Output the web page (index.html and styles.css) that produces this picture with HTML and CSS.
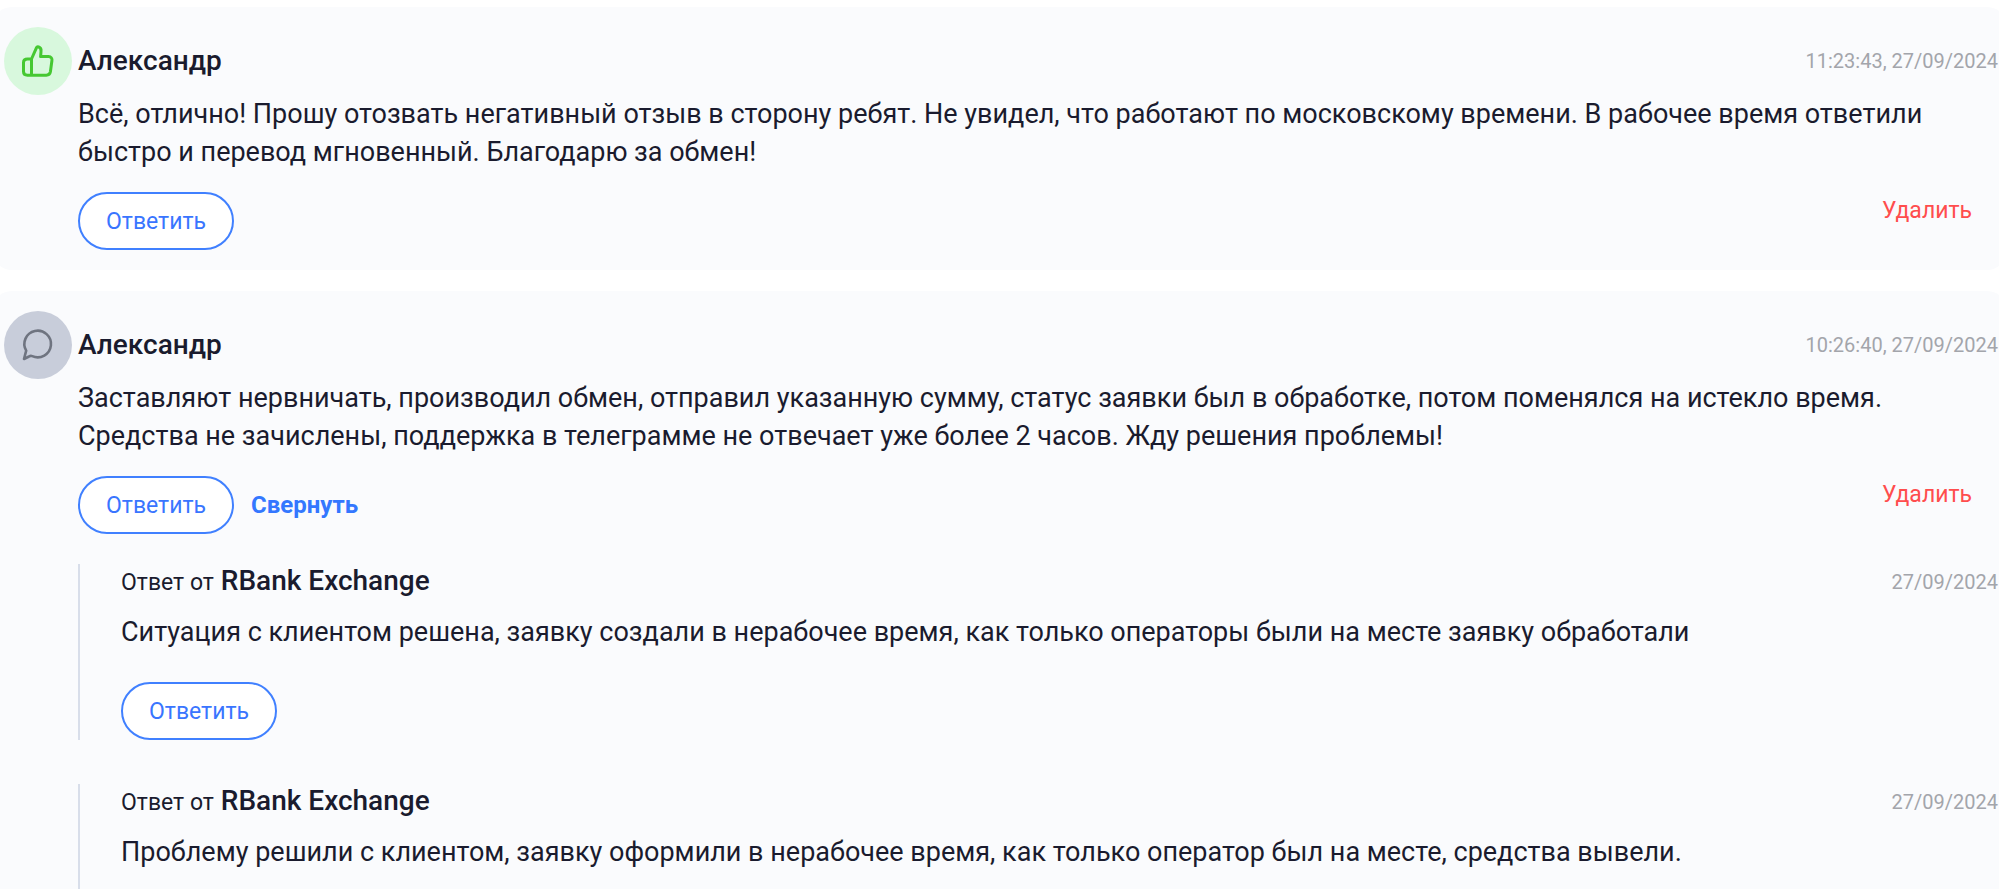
FILE: index.html
```html
<!DOCTYPE html>
<html lang="ru">
<head>
    <meta charset="UTF-8">
    <meta name="viewport" content="width=device-width, initial-scale=1.0">
    <title>Отзывы</title>
    <link rel="stylesheet" href="styles.css">
</head>
<body>
    <main class="reviews">
        <article class="review">
            <header class="review-head">
                <div class="avatar avatar-good">
                    <svg viewBox="0 0 34 34" fill="none" stroke="currentColor" stroke-width="3" stroke-linecap="round" stroke-linejoin="round">
                        <path d="M10.5 15 L15.4 3.8 Q16.2 2.3 17.6 2.9 C19.8 3.8 20.3 5.6 20 7.5 L19.6 12.6 H27.5 C30.1 12.6 31.4 14.4 30.9 16.8 L29.4 27.8 C29 30.3 27.7 31.2 25.3 31.2 H6.5 C4 31.2 2.5 30 2.5 27.5 V18.5 C2.5 16 4 15 6.5 15 H10.5 V31"/>
                    </svg>
                </div>
                <h2 class="author">Александр</h2>
                <time class="date">11:23:43, 27/09/2024</time>
            </header>
            <div class="review-body">
                <p class="text">Всё, отлично! Прошу отозвать негативный отзыв в сторону ребят. Не увидел, что работают по московскому времени. В рабочее время ответили быстро и перевод мгновенный. Благодарю за обмен!</p>
                <div class="actions">
                    <button class="btn" type="button">Ответить</button>
                    <button class="delete" type="button">Удалить</button>
                </div>
            </div>
        </article>

        <article class="review">
            <header class="review-head">
                <div class="avatar avatar-neutral">
                    <svg viewBox="0 0 34 34" fill="none" stroke="currentColor" stroke-width="2.6" stroke-linecap="round" stroke-linejoin="round">
                        <path d="M3 31 L5.2 22.7 A13.3 13.3 0 1 1 11.2 28.1 Q9.6 27.5 8 28.5 Z"/>
                    </svg>
                </div>
                <h2 class="author">Александр</h2>
                <time class="date">10:26:40, 27/09/2024</time>
            </header>
            <div class="review-body">
                <p class="text">Заставляют нервничать, производил обмен, отправил указанную сумму, статус заявки был в обработке, потом поменялся на истекло время. Средства не зачислены, поддержка в телеграмме не отвечает уже более 2 часов. Жду решения проблемы!</p>
                <div class="actions">
                    <button class="btn" type="button">Ответить</button>
                    <button class="toggle" type="button">Свернуть</button>
                    <button class="delete" type="button">Удалить</button>
                </div>

                <div class="replies">
                    <section class="reply">
                        <header class="reply-head">
                            <h3 class="reply-author"><span>Ответ от</span> RBank Exchange</h3>
                            <time class="date">27/09/2024</time>
                        </header>
                        <p class="text">Ситуация с клиентом решена, заявку создали в нерабочее время, как только операторы были на месте заявку обработали</p>
                        <button class="btn" type="button">Ответить</button>
                    </section>
                    <section class="reply">
                        <header class="reply-head">
                            <h3 class="reply-author"><span>Ответ от</span> RBank Exchange</h3>
                            <time class="date">27/09/2024</time>
                        </header>
                        <p class="text">Проблему решили с клиентом, заявку оформили в нерабочее время, как только оператор был на месте, средства вывели.</p>
                    </section>
                </div>
            </div>
        </article>
    </main>
</body>
</html>
```
FILE: styles.css
```css
body {
    margin: 0;
    font-family: Roboto, sans-serif;
    color: #1a1b2e;
    background-color: #fff;
    overflow-x: hidden;
}

h2, h3, p {
    margin: 0;
}

button {
    font-family: inherit;
    cursor: pointer;
}

.reviews {
    display: flex;
    flex-direction: column;
    gap: 21px;
    margin: 0 -8px;
    padding-top: 7px;
}

.review {
    padding: 20px 9px 20px 12px;
    border-radius: 20px;
    background-color: #fafbfd;
}

.review-head {
    display: flex;
    align-items: center;
    gap: 6px;
}

.avatar {
    display: flex;
    align-items: center;
    justify-content: center;
    width: 68px;
    height: 68px;
    border-radius: 50%;
}

.avatar svg {
    width: 34px;
    height: 34px;
}

.avatar-good {
    color: #46c832;
    background-color: #d8f8dd;
}

.avatar-neutral {
    color: #6f7480;
    background-color: #c8cdda;
}

.author,
.reply-author {
    font-size: 28px;
    line-height: 34px;
    font-weight: 500;
}

.date {
    margin-left: auto;
    font-size: 20px;
    line-height: 34px;
    color: #a3a5ab;
}

.review-body {
    padding-left: 74px;
}

.text {
    font-size: 27px;
    line-height: 38px;
}

.actions {
    display: flex;
    align-items: center;
    gap: 17px;
    margin-top: 21px;
}

.btn {
    height: 58px;
    padding: 0 26px;
    border: 2px solid #4080ff;
    border-radius: 29px;
    background-color: #fff;
    color: #3975ff;
    font-size: 23px;
}

.toggle,
.delete {
    padding: 0;
    border: none;
    background: none;
    line-height: 38px;
}

.toggle {
    color: #3377ff;
    font-size: 24px;
    font-weight: 700;
}

.delete {
    align-self: flex-start;
    margin-left: auto;
    margin-right: 26px;
    color: #ff4d4d;
    font-size: 23px;
}

.replies {
    display: flex;
    flex-direction: column;
    gap: 44px;
    margin-top: 30px;
}

.reply {
    padding-left: 41px;
    border-left: 2px solid #d8deea;
}

.reply-head {
    display: flex;
    align-items: center;
    margin-bottom: 13px;
}

.reply-author span {
    font-size: 23px;
    font-weight: 400;
}

.reply .btn {
    margin-top: 31px;
}

.reply:last-child {
    padding-bottom: 32px;
}
```
